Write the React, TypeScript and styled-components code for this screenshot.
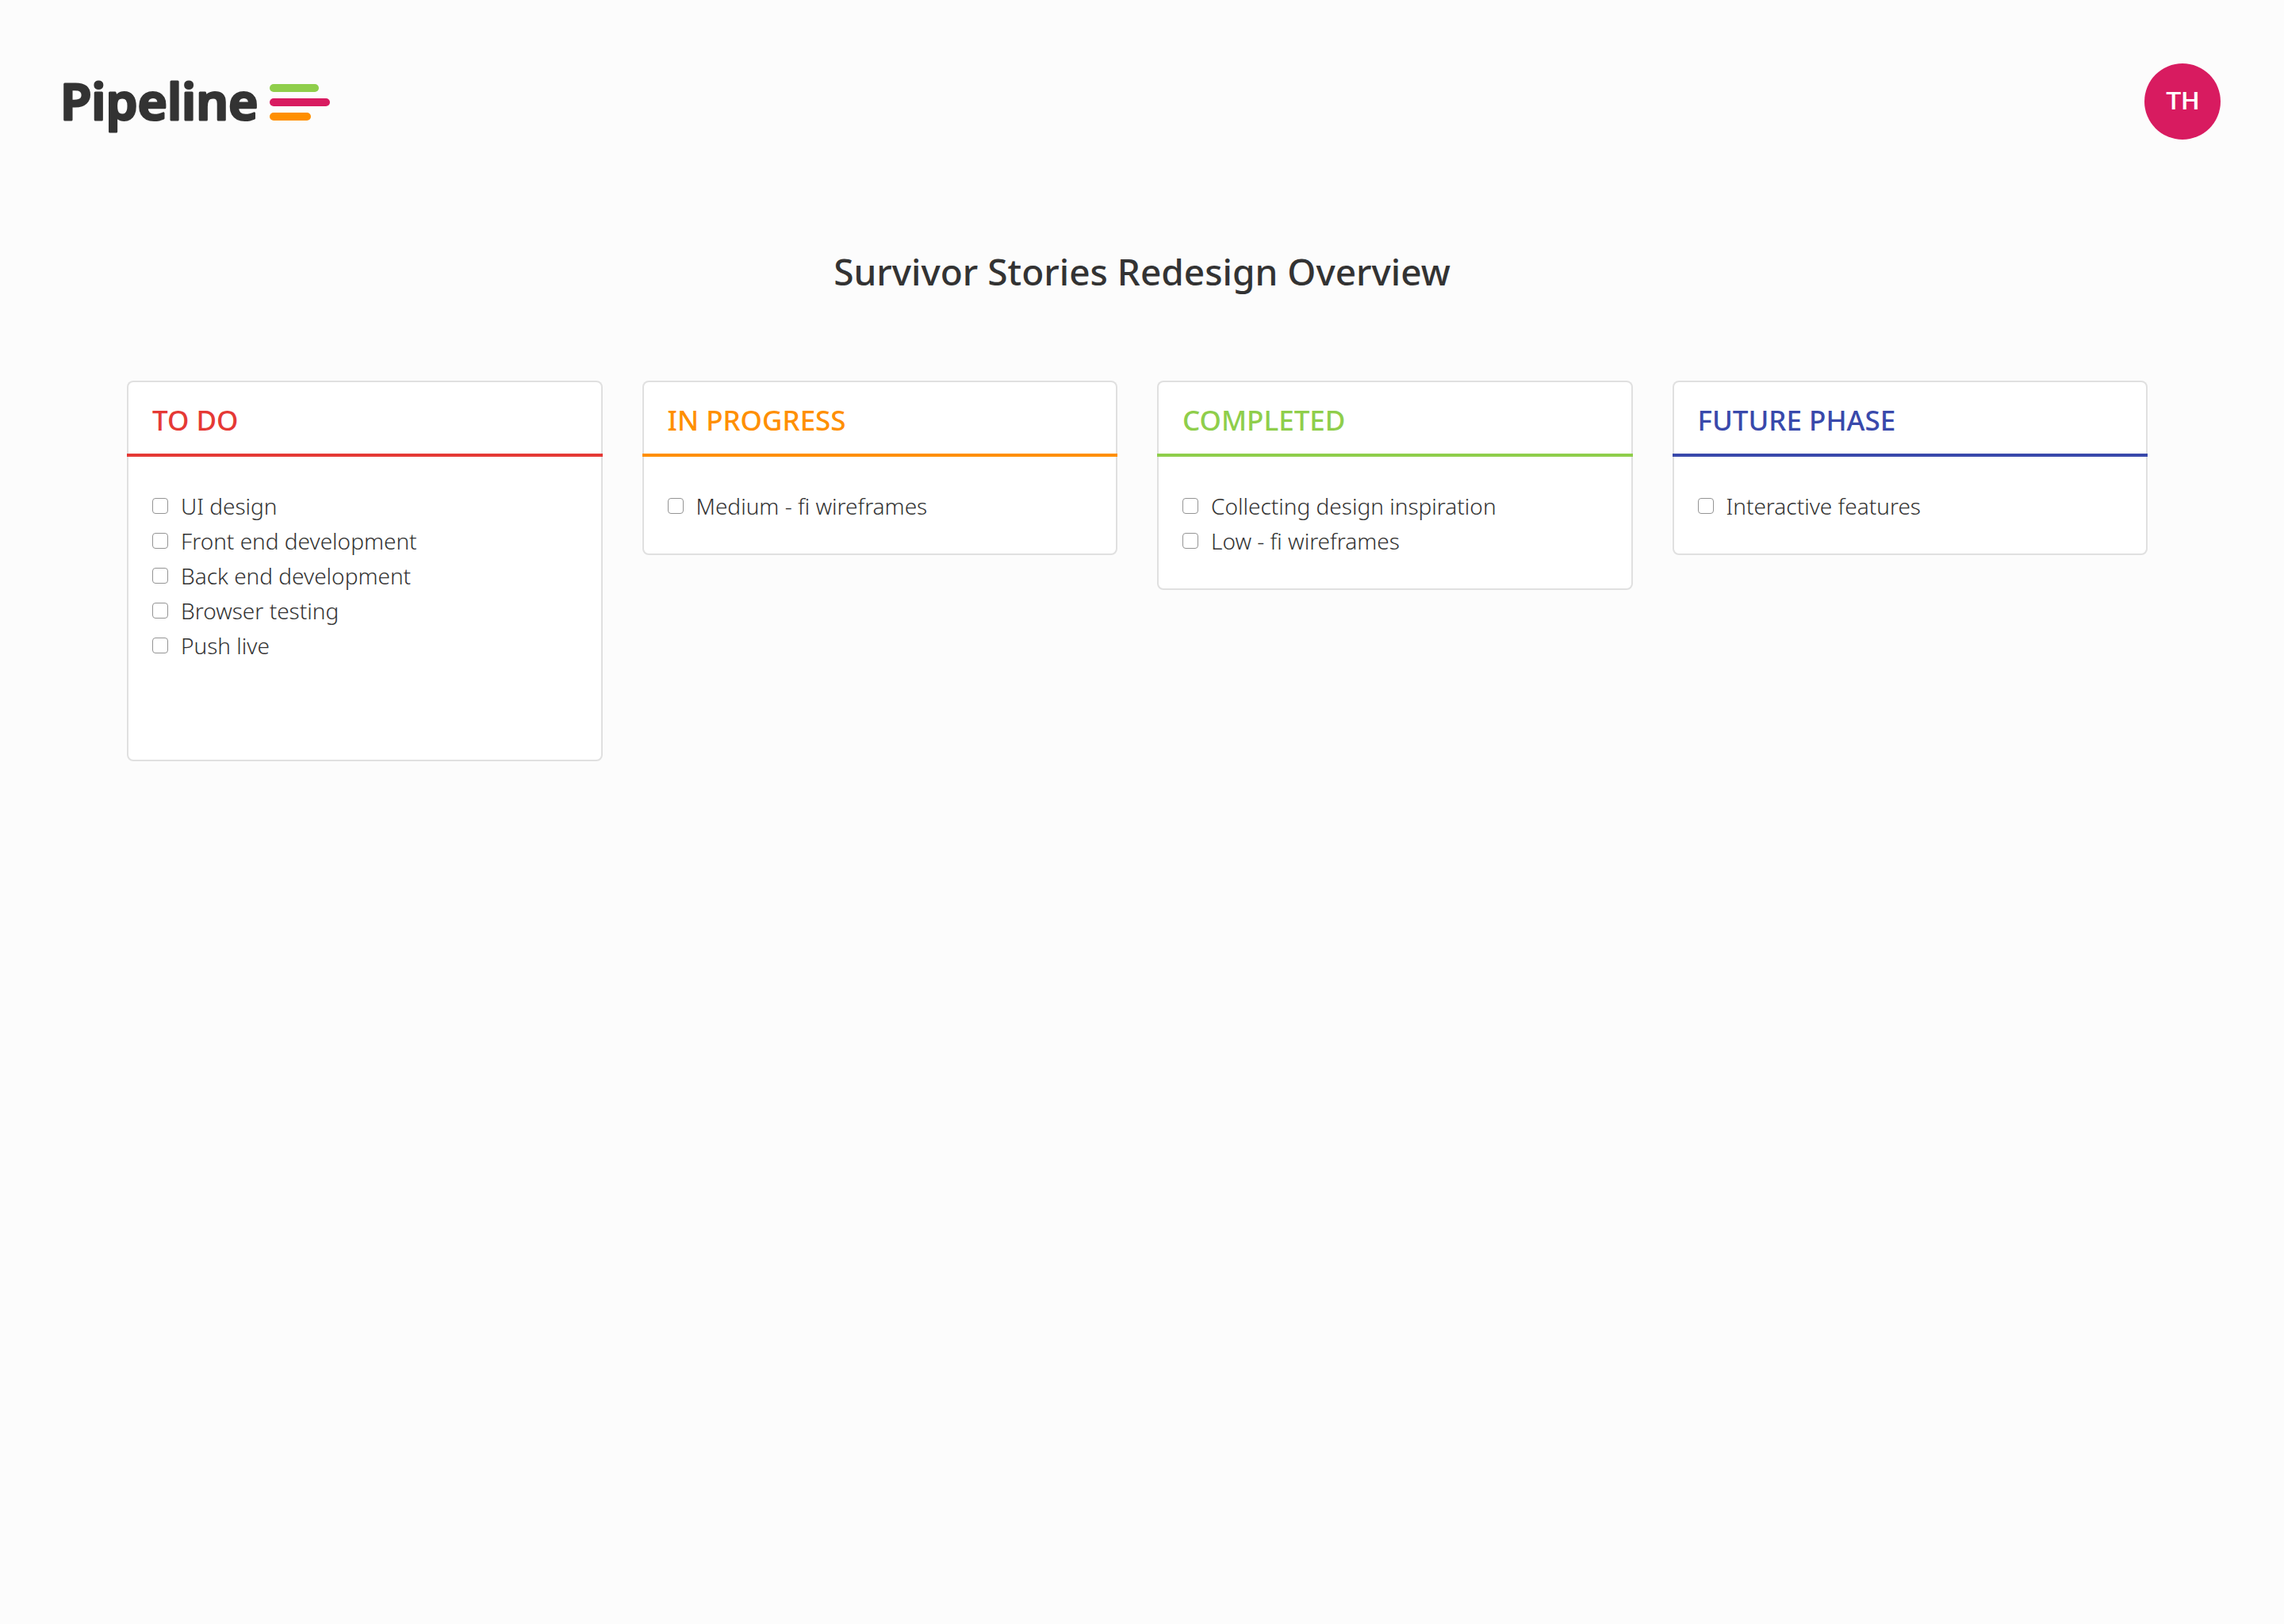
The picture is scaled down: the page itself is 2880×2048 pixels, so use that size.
import React, { useId } from "react";
import styled, { createGlobalStyle } from "styled-components";

const GlobalStyle = createGlobalStyle`
  *, *::before, *::after { box-sizing: border-box; }
  body {
    margin: 0;
    background: #fcfcfc;
    color: #333333;
    font-family: "Noto Sans", "Open Sans", sans-serif;
  }
`;

const Header = styled.header`
  display: flex;
  justify-content: space-between;
  align-items: flex-start;
  padding: 80px 80px 0 76px;
`;

const Brand = styled.a`
  display: flex;
  height: 96px;
  text-decoration: none;
`;

const Wordmark = styled.text`
  fill: #333333;
  stroke: #333333;
  stroke-width: 3px;
  stroke-linejoin: round;
  font-family: "Noto Sans", sans-serif;
  font-size: 64px;
  font-weight: 600;
`;

const Avatar = styled.button`
  width: 96px;
  height: 96px;
  padding: 0 0 2px;
  border: 0;
  border-radius: 50%;
  background: #d81b60;
  color: #ffffff;
  font-family: Roboto, sans-serif;
  font-size: 32px;
  font-weight: 500;
  line-height: 40px;
`;

const Title = styled.h1`
  margin: 130px 0 0;
  text-align: center;
  font-size: 46px;
  font-weight: 500;
  line-height: 72px;
`;

const Board = styled.section`
  display: grid;
  grid-template-columns: repeat(4, 1fr);
  align-items: start;
  gap: 50px;
  padding: 102px 172px 80px 160px;
`;

const Card = styled.article`
  border-radius: 8px;
  background: #ffffff;
  box-shadow: inset 0 0 0 2px #e0e0e0;
`;

const CardTitle = styled.h2<{ $color: string }>`
  margin: 0;
  padding: 28px 32px 20px;
  border-bottom: 4px solid ${(p) => p.$color};
  color: ${(p) => p.$color};
  font-size: 35px;
  font-weight: 500;
  line-height: 44px;
`;

const Tasks = styled.ul<{ $roomy?: boolean }>`
  margin: 0;
  padding: 40px 32px ${(p) => (p.$roomy ? 124 : 40)}px;
  list-style: none;
`;

const Task = styled.li`
  display: flex;
  align-items: center;
  gap: 16px;
  height: 44px;
`;

const Tick = styled.input`
  appearance: none;
  flex: none;
  width: 20px;
  height: 20px;
  margin: 0;
  border: 1px solid #949494;
  border-radius: 4px;
  background: #ffffff;

  &:checked {
    background: #949494;
  }
`;

const TaskLabel = styled.label`
  font-size: 28px;
  font-weight: 300;
  line-height: 44px;
`;

type Column = { title: string; color: string; tasks: string[]; roomy?: boolean };

const columns: Column[] = [
  {
    title: "TO DO",
    color: "#e53935",
    roomy: true,
    tasks: ["UI design", "Front end development", "Back end development", "Browser testing", "Push live"],
  },
  { title: "IN PROGRESS", color: "#ff8f00", tasks: ["Medium - fi wireframes"] },
  { title: "COMPLETED", color: "#8fce4b", tasks: ["Collecting design inspiration", "Low - fi wireframes"] },
  { title: "FUTURE PHASE", color: "#3949ab", tasks: ["Interactive features"] },
];

function Logo() {
  return (
    <svg width="340" height="96" viewBox="0 0 340 96">
      <Wordmark x="0" y="71">
        Pipeline
      </Wordmark>
      <rect x="264" y="26" width="62" height="10" rx="5" fill="#8fce4b" />
      <rect x="264" y="44" width="76" height="10" rx="5" fill="#d81b60" />
      <rect x="264" y="62" width="52" height="10" rx="5" fill="#ff8f00" />
    </svg>
  );
}

function TaskRow({ text }: { text: string }) {
  const id = useId();
  return (
    <Task>
      <Tick type="checkbox" id={id} />
      <TaskLabel htmlFor={id}>{text}</TaskLabel>
    </Task>
  );
}

export default function App() {
  return (
    <>
      <GlobalStyle />
      <Header>
        <Brand href="#">
          <Logo />
        </Brand>
        <Avatar type="button">TH</Avatar>
      </Header>
      <main>
        <Title>Survivor Stories Redesign Overview</Title>
        <Board>
          {columns.map((column) => (
            <Card key={column.title}>
              <CardTitle $color={column.color}>{column.title}</CardTitle>
              <Tasks $roomy={column.roomy}>
                {column.tasks.map((task) => (
                  <TaskRow key={task} text={task} />
                ))}
              </Tasks>
            </Card>
          ))}
        </Board>
      </main>
    </>
  );
}
